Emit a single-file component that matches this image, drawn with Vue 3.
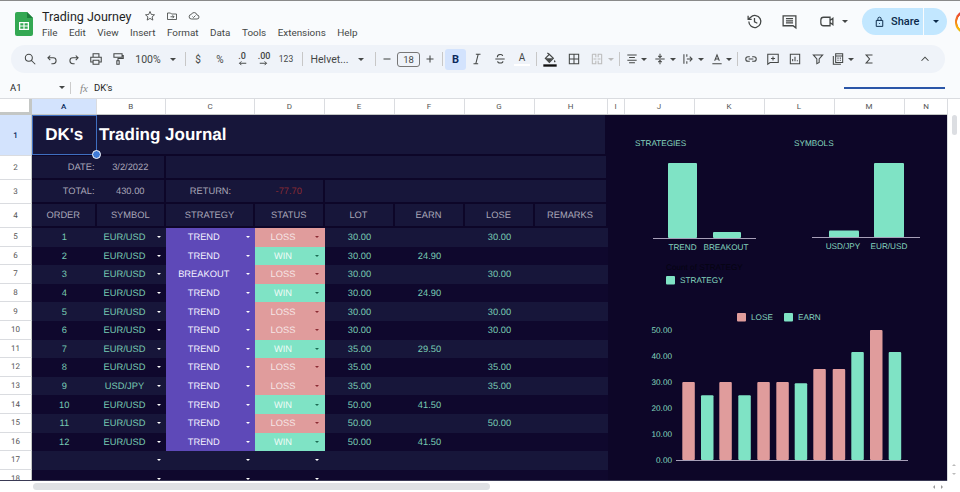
<template>
  <div class="app">
    <header class="titlebar">
      <svg class="logo" viewBox="0 0 18 24">
        <path d="M2 0h10l6 6v16a2 2 0 0 1-2 2H2a2 2 0 0 1-2-2V2a2 2 0 0 1 2-2z" fill="#34a853" />
        <path d="M12 0l6 6h-6z" fill="#1e7e3c" />
        <path d="M4 10h10v8H4zM5.300 11.300v2.100h3.100v-2.100zM9.600 11.300v2.100h3.100v-2.100zM5.300 14.600v2.100h3.100v-2.100zM9.600 14.600v2.100h3.100v-2.100z" fill="#fff" fill-rule="evenodd" />
      </svg>
      <div class="docinfo">
        <div class="docline">
          <span class="docname">Trading Journey</span>
          <svg class="ico doc-ico" viewBox="0 0 24 24"><path d="M12 3l2.700 6 6.300.6-4.800 4.200 1.500 6.400-5.700-3.400-5.700 3.400 1.500-6.400L3 9.600 9.300 9z" /></svg>
          <svg class="ico doc-ico" viewBox="0 0 24 24"><path d="M3 6h6l2 2h10v11H3zM9 13.500h7M13 10.500l3 3-3 3" /></svg>
          <svg class="ico doc-ico" viewBox="0 0 24 24"><path d="M7 18a4.500 4.500 0 0 1-.5-9A6 6 0 0 1 18 10a4 4 0 0 1 0 8zM9 13l2 2 4-4" /></svg>
        </div>
        <nav class="menu">
          <span v-for="m in menus" :key="m">{{ m }}</span>
        </nav>
      </div>
      <div class="actions">
        <svg class="ico act-ico" viewBox="0 0 24 24"><path d="M4 12a8.500 8.500 0 1 0 2.600-6.100L3 9M3 4v5h5M12 7v5.500l4 2" /></svg>
        <svg class="ico act-ico act-comment" viewBox="0 0 24 24"><path d="M3 4h18v17l-4-3H3zM7 8h10M7 11h10M7 14h10" /></svg>
        <svg class="ico act-ico act-cam" viewBox="0 0 24 24"><path d="M8 6h9v12H8a4 4 0 0 1-4-4v-4a4 4 0 0 1 4-4zM17 10.500l4-3v9l-4-3" /></svg>
        <i class="tcaret act-caret"></i>
        <div class="share">
          <svg class="ico lock" viewBox="0 0 24 24"><path d="M6 10h12v11H6zM9 10V7a3 3 0 0 1 6 0v3M12 15v1.500" /></svg>
          <span class="share-label">Share</span>
          <span class="share-more"><i class="tcaret dark"></i></span>
        </div>
        <div class="avatar"></div>
      </div>
    </header>

    <div class="toolbar">
      <template v-for="(t, i) in tools" :key="i">
        <i v-if="t.k === 'sep'" class="sep" :style="{ marginLeft: t.l + 'px', marginRight: t.r + 'px' }"></i>
        <span v-else-if="t.k === 'caret'" class="tb" :style="boxStyle(t, 6)"><i class="tcaret" :class="{ off: t.off }"></i></span>
        <span v-else-if="t.k === 'text'" class="tb label" :class="t.c" :style="boxStyle(t, 22)">{{ t.s }}</span>
        <span v-else-if="t.k === 'dec'" class="tb" :style="boxStyle(t, 22)">
          <span class="dec">
            <span>{{ t.s }}</span>
            <svg class="ico dec-arrow" viewBox="0 0 12 6"><path :d="t.d" /></svg>
          </span>
        </span>
        <span v-else-if="t.k === 'under'" class="tb" :style="boxStyle(t, 22)">
          <span class="under">
            <span>A</span>
            <i class="bar"></i>
          </span>
        </span>
        <span v-else-if="t.k === 'fill'" class="tb" :style="boxStyle(t, 22)">
          <svg class="ico fill" viewBox="0 0 24 24">
            <path d="M5 11l6-6 6 6-6 6zM8 3l3 2" />
            <path d="M5.500 11h11L11 16.500zM19 13c1.200 2 1.800 3 .8 3.800-1 .5-2.200-.2-1.800-1.300z" fill="#444746" stroke="none" />
            <rect x="2" y="20" width="20" height="3.500" fill="#111" stroke="none" />
          </svg>
        </span>
        <span v-else class="tb" :style="boxStyle(t, 22)">
          <svg class="ico" :class="t.c" viewBox="0 0 24 24"><path :d="t.d" /></svg>
        </span>
      </template>
    </div>

    <div class="formula">
      <span class="cellref">A1</span>
      <i class="tcaret"></i>
      <i class="fsep"></i>
      <span class="fx">fx</span>
      <span class="fval">DK's</span>
      <i class="progress"></i>
    </div>

    <div class="sheetarea">
      <div class="sheet">
        <div class="grid colhead">
          <div class="corner"></div>
          <div v-for="c in columns" :key="c" class="colname" :class="{ on: c === 'A' }">{{ c }}</div>
        </div>

        <div class="grid row r1">
          <div class="rownum on">1</div>
          <div class="cell sel">DK's<i class="handle"></i></div>
          <div class="cell title">Trading Journal</div>
        </div>

        <div class="grid row r24">
          <div class="rownum">2</div>
          <div class="cell right muted nob">DATE:</div>
          <div class="cell muted">3/2/2022</div>
          <div class="cell span6"></div>
        </div>

        <div class="grid row r24">
          <div class="rownum">3</div>
          <div class="cell right muted nob">TOTAL:</div>
          <div class="cell muted">430.00</div>
          <div class="cell muted nob">RETURN:</div>
          <div class="cell neg">-77.70</div>
          <div class="cell span4"></div>
        </div>

        <div class="grid row r24">
          <div class="rownum">4</div>
          <div v-for="h in headers" :key="h" class="cell muted">{{ h }}</div>
        </div>

        <div v-for="(r, i) in rows" :key="i" class="grid row data" :class="{ alt: i % 2 === 1 }">
          <div class="rownum">{{ i + 5 }}</div>
          <div class="dcell">{{ r.order }}</div>
          <div class="dcell drop"><span class="txt">{{ r.symbol }}</span><i class="dcaret"></i></div>
          <div class="dcell drop" :class="{ purple: r.strategy }"><span class="txt">{{ r.strategy }}</span><i class="dcaret"></i></div>
          <div class="dcell drop" :class="statusClass(r.status)"><span class="txt">{{ r.status }}</span><i class="dcaret"></i></div>
          <div class="dcell">{{ r.lot }}</div>
          <div class="dcell">{{ r.earn }}</div>
          <div class="dcell">{{ r.lose }}</div>
          <div class="dcell"></div>
        </div>

        <svg class="chart chart-a" viewBox="630 130 135 160">
          <text x="635" y="146" class="ct">STRATEGIES</text>
          <rect x="668" y="163" width="29" height="75" rx="1" class="earn" />
          <rect x="713" y="232" width="28" height="6" rx="1" class="earn" />
          <path d="M653 238.500H756" class="axis" />
          <text x="682.500" y="249.500" class="ct" text-anchor="middle">TREND</text>
          <text x="726" y="249.500" class="ct" text-anchor="middle">BREAKOUT</text>
          <text x="666" y="270" class="ct hidden-label">Count of STRATEGY</text>
          <rect x="666" y="276" width="9" height="8.500" rx="1" class="earn" />
          <text x="680" y="283" class="ct">STRATEGY</text>
        </svg>

        <svg class="chart chart-b" viewBox="790 130 135 125">
          <text x="794" y="146" class="ct">SYMBOLS</text>
          <rect x="829" y="230.500" width="30" height="7" rx="1" class="earn" />
          <rect x="874" y="163" width="30" height="74.500" rx="1" class="earn" />
          <path d="M812 237.500H920" class="axis" />
          <text x="843" y="248.500" class="ct" text-anchor="middle">USD/JPY</text>
          <text x="889" y="248.500" class="ct" text-anchor="middle">EUR/USD</text>
        </svg>

        <svg class="chart chart-c" viewBox="640 305 280 165">
          <rect x="737" y="313" width="9" height="8.500" rx="1" class="lose" />
          <text x="751" y="320" class="ct">LOSE</text>
          <rect x="784" y="313" width="9" height="8.500" rx="1" class="earn" />
          <text x="798" y="320" class="ct">EARN</text>
          <text v-for="(l, i) in yLabels" :key="l" x="672" :y="333 + i * 26" class="ct" text-anchor="end">{{ l }}</text>
          <rect
            v-for="b in bars"
            :key="b.x"
            :x="b.x"
            :y="460 - b.v * 2.6"
            width="12.500"
            :height="b.v * 2.6"
            rx="1"
            :class="b.type"
          />
          <path d="M676 460.500H908" class="axis" />
        </svg>
      </div>

      <div class="vscroll">
        <div class="vthumb"></div>
        <div class="vbtns">
          <i class="arr up"></i>
          <i class="arr down"></i>
        </div>
      </div>
    </div>

    <div class="hscroll">
      <div class="hthumb"></div>
      <div class="hbtns">
        <i class="arr left"></i>
        <i class="arr rightward"></i>
      </div>
    </div>
  </div>
</template>

<script setup>
const menus = ['File', 'Edit', 'View', 'Insert', 'Format', 'Data', 'Tools', 'Extensions', 'Help']
const columns = ['A', 'B', 'C', 'D', 'E', 'F', 'G', 'H', 'I', 'J', 'K', 'L', 'M', 'N']
const headers = ['ORDER', 'SYMBOL', 'STRATEGY', 'STATUS', 'LOT', 'EARN', 'LOSE', 'REMARKS']
const yLabels = ['50.00', '40.00', '30.00', '20.00', '10.00', '0.00']

const tools = [
  { d: 'M10 4a6 6 0 1 0 0 12a6 6 0 0 0 0-12zM15 15l6 6' },
  { d: 'M9 6l-4 4 4 4M5 10h9a5 5 0 0 1 0 10h-3' },
  { d: 'M15 6l4 4-4 4M19 10h-9a5 5 0 0 0 0 10h3' },
  { d: 'M7 8V3h10v5M7 17H3V9h18v8h-4M7 14h10v7H7z' },
  { d: 'M5 3h14v6H5zM19 6h2v5h-9v4M10 15h4v6h-4z' },
  { k: 'text', s: '100%', w: 38 },
  { k: 'caret', w: 12 },
  { k: 'sep', l: 6, r: 1 },
  { k: 'text', s: '$', c: 'small' },
  { k: 'text', s: '%', c: 'small' },
  { k: 'dec', s: '.0', d: 'M11 3H2M4.500 .5L2 3l2.500 2.500' },
  { k: 'dec', s: '.00', d: 'M1 3h9M7.500 .5L10 3 7.500 5.500' },
  { k: 'text', s: '123', c: 'tiny' },
  { k: 'sep', l: 5, r: 1 },
  { k: 'text', s: 'Helvet...', w: 51 },
  { k: 'caret', w: 12 },
  { k: 'sep', l: 8, r: 0 },
  { d: 'M6 12h12', w: 21 },
  { k: 'text', s: '18', c: 'sizebox', w: 23 },
  { d: 'M6 12h12M12 6v12', w: 20 },
  { k: 'sep', l: 2, r: 2 },
  { k: 'text', s: 'B', c: 'bold', w: 21 },
  { d: 'M10 4h8M6 20h8M14 4l-4 16' },
  { d: 'M4 12h16M7.500 9c-.5-6 9-6 9-2M8 16c0 4 9 4 9 0', w: 23 },
  { k: 'under' },
  { k: 'sep', l: 3, r: 1 },
  { k: 'fill', w: 24 },
  { d: 'M4 4h16v16H4zM4 12h16M12 4v16', w: 24 },
  { d: 'M4 4h6v5M4 4v16h6v-5M20 4h-6v5M20 4v16h-6v-5M6 12h5M18 12h-5', c: 'off' },
  { k: 'caret', w: 6, off: true },
  { k: 'sep', l: 5, r: 1 },
  { d: 'M4 5h16M7 9.500h10M4 14h16M7 18.500h10', w: 19, l: 1 },
  { k: 'caret' },
  { d: 'M4 12h16M12 3v6M9 6.500l3 3 3-3M12 21v-6M9 17.500l3-3 3 3', w: 16, l: 5 },
  { k: 'caret', l: 2 },
  { d: 'M5 4v16M10 12h9M15 8l4 4-4 4M10 4v4M10 16v4', w: 16, l: 4 },
  { k: 'caret', l: 2 },
  { d: 'M8 15l4-10 4 10M9.500 12h5M4 20h16', w: 16, l: 5 },
  { k: 'caret', l: 1 },
  { k: 'sep', l: 5, r: 1 },
  { d: 'M10 8H7a4 4 0 0 0 0 8h3M14 8h3a4 4 0 0 1 0 8h-3M8 12h8', w: 24 },
  { d: 'M3 4h18v14H7l-4 3zM12 7.500v7M8.500 11h7', w: 20 },
  { d: 'M4 4h16v16H4zM8 16v-4M12 16V8M16 16v-2', w: 24 },
  { d: 'M4 5h16l-6 7v6l-4 2v-8z' },
  { d: 'M4 7v14h13M8 3h12v15H8zM8 7h12M11 10.500h2M15 10.500h2M11 14h2M15 14h2', w: 18 },
  { k: 'caret', l: 1 },
  { d: 'M18 5H7l6 7-6 7h11', w: 24, l: 3 },
  { d: 'M6 15l6-6 6 6', l: 33 },
]

function boxStyle(t, w) {
  return { width: (t.w || w) + 'px', marginLeft: (t.l || 0) + 'px' }
}

const raw = [
  ['EUR/USD', 'TREND', 'LOSS', '30.00', '', '30.00'],
  ['EUR/USD', 'TREND', 'WIN', '30.00', '24.90', ''],
  ['EUR/USD', 'BREAKOUT', 'LOSS', '30.00', '', '30.00'],
  ['EUR/USD', 'TREND', 'WIN', '30.00', '24.90', ''],
  ['EUR/USD', 'TREND', 'LOSS', '30.00', '', '30.00'],
  ['EUR/USD', 'TREND', 'LOSS', '30.00', '', '30.00'],
  ['EUR/USD', 'TREND', 'WIN', '35.00', '29.50', ''],
  ['EUR/USD', 'TREND', 'LOSS', '35.00', '', '35.00'],
  ['USD/JPY', 'TREND', 'LOSS', '35.00', '', '35.00'],
  ['EUR/USD', 'TREND', 'WIN', '50.00', '41.50', ''],
  ['EUR/USD', 'TREND', 'LOSS', '50.00', '', '50.00'],
  ['EUR/USD', 'TREND', 'WIN', '50.00', '41.50', ''],
]

const rows = raw.map((r, i) => ({
  order: i + 1,
  symbol: r[0],
  strategy: r[1],
  status: r[2],
  lot: r[3],
  earn: r[4],
  lose: r[5],
}))
rows.push({}, {})

const barX = [682.3, 701, 719.3, 738.3, 757.3, 776.3, 794.7, 813.3, 832.7, 851.3, 870, 888.7]
const bars = raw.map((r, i) => ({
  x: barX[i],
  v: Number(r[4] || r[5]),
  type: r[4] ? 'earn' : 'lose',
}))

function statusClass(s) {
  if (s === 'LOSS') return 'loss'
  if (s === 'WIN') return 'win'
  return ''
}
</script>

<style scoped>
.app {
  width: 960px;
  height: 492px;
  overflow: hidden;
  background: #f9fbfd;
  border-top: 1px solid #8a8a8a;
  box-sizing: border-box;
  font-family: Roboto, "Liberation Sans", sans-serif;
  color: #444746;
  display: flex;
  flex-direction: column;
}

.ico {
  width: 14px;
  height: 14px;
  fill: none;
  stroke: #444746;
  stroke-width: 1.8;
  display: block;
}

.titlebar {
  height: 43px;
  flex: none;
  display: flex;
  align-items: flex-start;
  padding-left: 15px;
  box-sizing: border-box;
}

.logo {
  width: 18px;
  height: 24px;
  margin-top: 11px;
}

.docinfo {
  margin-left: 9px;
  padding-top: 6px;
}

.docline {
  display: flex;
  align-items: center;
  height: 18px;
}

.docname {
  font-size: 12.500px;
  color: #1f1f1f;
  width: 102px;
  white-space: nowrap;
}

.doc-ico {
  width: 12px;
  height: 12px;
  margin-right: 10px;
  stroke-width: 1.7;
}

.menu {
  display: flex;
  gap: 11.500px;
  font-size: 9.900px;
  margin-top: 2px;
  color: #444746;
}

.actions {
  margin-left: auto;
  display: flex;
  align-items: center;
  height: 27px;
  margin-top: 7px;
}

.act-ico {
  width: 17px;
  height: 17px;
}

.act-comment {
  margin-left: 18px;
}

.act-cam {
  margin-left: 20px;
}

.act-caret {
  margin-left: 7px;
}

.tcaret {
  display: block;
  width: 0;
  height: 0;
  border-left: 3px solid transparent;
  border-right: 3px solid transparent;
  border-top: 3px solid #444746;
  flex: none;
}

.tcaret.off {
  border-top-color: #bbb;
}

.tcaret.dark {
  border-top-color: #0b2a4a;
}

.share {
  margin-left: 14px;
  width: 85px;
  height: 27px;
  border-radius: 14px;
  background: #c2e7ff;
  display: flex;
  align-items: center;
  padding-left: 11px;
  box-sizing: border-box;
  color: #0b2a4a;
}

.lock {
  width: 13px;
  height: 13px;
  stroke: #0b2a4a;
}

.share-label {
  font-size: 11px;
  font-weight: 500;
  margin-left: 5px;
}

.share-more {
  margin-left: auto;
  width: 24px;
  height: 27px;
  border-left: 1px solid #f9fbfd;
  display: flex;
  align-items: center;
  justify-content: center;
  box-sizing: border-box;
}

.avatar {
  margin-left: 8px;
  margin-right: -19px;
  width: 24px;
  height: 24px;
  flex: none;
  border-radius: 50%;
  background: radial-gradient(circle, #fff 9.500px, transparent 10px), conic-gradient(from 230deg, #fbbc05, #ea4335 90deg, #4285f4 180deg, #34a853 270deg, #fbbc05);
}

.toolbar {
  flex: none;
  margin: 1px 15px 0 11px;
  height: 28px;
  border-radius: 14px;
  background: #eff3f9;
  display: flex;
  align-items: center;
  padding-left: 8px;
}

.tb {
  flex: none;
  height: 100%;
  display: flex;
  align-items: center;
  justify-content: center;
}

.tb.label {
  font-size: 10.500px;
}

.tb.small {
  font-size: 10px;
}

.tb.tiny {
  font-size: 8.500px;
}

.tb.sizebox {
  height: 15px;
  border: 1px solid #777;
  border-radius: 3px;
  box-sizing: border-box;
  font-size: 9.500px;
}

.tb.bold {
  height: 21px;
  background: #d3e3fd;
  border-radius: 3px;
  font-weight: 700;
  font-size: 11px;
  color: #0b2a5c;
}

.sep {
  flex: none;
  width: 1px;
  height: 14px;
  background: #c7c7c7;
}

.dec {
  display: flex;
  flex-direction: column;
  align-items: center;
  font-size: 9px;
  font-weight: 500;
  line-height: 9px;
}

.dec-arrow {
  width: 9px;
  height: 4.500px;
  stroke-width: 1.3;
}

.under {
  display: flex;
  flex-direction: column;
  align-items: center;
  font-size: 10px;
  line-height: 11px;
}

.bar {
  width: 16px;
  height: 2px;
  background: #fff;
  margin-top: 1px;
}

.ico.fill {
  width: 16px;
  height: 16px;
}

.ico.off {
  stroke: #bbb;
}

.formula {
  flex: none;
  height: 25px;
  display: flex;
  align-items: center;
  padding: 4px 0 0 10px;
  font-size: 9.500px;
  color: #1f1f1f;
  box-sizing: border-box;
}

.cellref {
  width: 49px;
}

.fsep {
  width: 1px;
  height: 12px;
  background: #ccc;
  margin-left: 5px;
}

.fx {
  font-family: "Liberation Serif", serif;
  font-style: italic;
  font-size: 11px;
  color: #888;
  margin-left: 9px;
}

.fval {
  margin-left: 6px;
}

.progress {
  width: 101px;
  height: 2px;
  background: #2b56a8;
  margin-left: auto;
  margin-right: 15px;
}

.sheetarea {
  flex: none;
  height: 383px;
  display: flex;
  border-top: 1px solid #dadce0;
  box-sizing: border-box;
}

.sheet {
  position: relative;
  width: 947px;
  flex: none;
  overflow: hidden;
  background: #0d0628;
  border-bottom: 1px solid #3a3a55;
  box-sizing: border-box;
}

.grid {
  display: grid;
  grid-template-columns: 32px 64.500px 69.500px 89px 69.500px 70px 70px 70px 73px;
}

.colhead {
  grid-template-columns: 32px 64.500px 69.500px 89px 69.500px 70px 70px 70px 73px 17px 70px 70px 70px 70px 44px;
  height: 16px;
  background: #fff;
  border-bottom: 1px solid #c4c7c5;
  box-sizing: border-box;
}

.corner {
  background: #fff;
  border-right: 3px solid #c4c7c5;
  border-bottom: 2px solid #c4c7c5;
  box-sizing: border-box;
}

.colname {
  font-size: 8px;
  color: #555;
  display: flex;
  align-items: center;
  justify-content: center;
  border-right: 1px solid #dadce0;
  box-sizing: border-box;
}

.colname.on {
  background: #d3e3fd;
  color: #0b2a5c;
  font-weight: 500;
}

.rownum {
  background: #fff;
  font-size: 8px;
  color: #555;
  font-family: Roboto, "Liberation Sans", sans-serif;
  display: flex;
  align-items: center;
  justify-content: center;
  border-bottom: 1px solid #dadce0;
  border-right: 1px solid #c4c7c5;
  box-sizing: border-box;
}

.rownum.on {
  background: #d3e3fd;
  color: #0b2a5c;
  font-weight: 500;
}

.row {
  font-family: "Liberation Sans", Arial, sans-serif;
  font-size: 9.300px;
  text-rendering: geometricPrecision;
}

.r1 {
  height: 41px;
  grid-template-columns: 32px 64.500px 510.500px;
}

.r24 {
  height: 24px;
}

.cell {
  background: #17163a;
  border-right: 2px solid #0d0628;
  border-bottom: 2px solid #0d0628;
  box-sizing: border-box;
  display: flex;
  align-items: center;
  justify-content: center;
  min-width: 0;
}

.cell.nob {
  border-right: none;
}

.cell.right {
  justify-content: flex-end;
  padding-right: 2px;
}

.cell.muted {
  color: #a9a6b8;
}

.cell.neg {
  color: #8a2a33;
}

.cell.span6 {
  grid-column: span 6;
}

.cell.span4 {
  grid-column: span 4;
}

.sel {
  position: relative;
  font-size: 17px;
  font-weight: 700;
  color: #fff;
  border: 1.500px solid #3f6fc0;
  margin-bottom: 1px;
}

.handle {
  position: absolute;
  right: -5px;
  bottom: -5px;
  width: 7px;
  height: 7px;
  border-radius: 50%;
  background: #3f7ad6;
  border: 1px solid #fff;
  z-index: 2;
}

.cell.title {
  justify-content: flex-start;
  padding-left: 2.500px;
  font-size: 17px;
  font-weight: 700;
  color: #fff;
}

.data {
  height: 18.600px;
}

.dcell {
  display: flex;
  align-items: center;
  justify-content: center;
  background: #17163a;
  color: #78cbb3;
  min-width: 0;
}

.alt .dcell {
  background: #0f082d;
}

.data .dcell.purple {
  background: #5e49b8;
  color: #f4f2ff;
}

.data .dcell.loss {
  background: #e09c9c;
  color: #f6e6e6;
}

.data .dcell.win {
  background: #7fe3c5;
  color: #f0fbf7;
}

.txt {
  flex: 1;
  text-align: center;
  min-width: 0;
}

.dcaret {
  flex: none;
  width: 0;
  height: 0;
  margin: 0 5.500px 0 4px;
  border-left: 2.500px solid transparent;
  border-right: 2.500px solid transparent;
  border-top: 2.500px solid #fff;
}

.loss .dcaret {
  border-top-color: #8a2b33;
}

.win .dcaret {
  border-top-color: #1d6b52;
}

.chart {
  position: absolute;
  font-family: "Liberation Sans", Arial, sans-serif;
  text-rendering: geometricPrecision;
}

.chart-a {
  left: 630px;
  top: 31px;
  width: 135px;
  height: 160px;
}

.chart-b {
  left: 790px;
  top: 31px;
  width: 135px;
  height: 125px;
}

.chart-c {
  left: 640px;
  top: 206px;
  width: 280px;
  height: 165px;
}

.ct {
  font-size: 8.200px;
  fill: #85d6bf;
}

.ct.hidden-label {
  fill: #050410;
}

.earn {
  fill: #7fe3c5;
}

.lose {
  fill: #e09c9c;
}

.axis {
  stroke: #a79fb8;
  stroke-width: 1;
  fill: none;
}

.vscroll {
  flex: 1;
  display: flex;
  flex-direction: column;
  align-items: center;
  background: #fff;
  border-left: 1px solid #dadce0;
  padding-top: 16px;
  box-sizing: border-box;
}

.vthumb {
  width: 5px;
  height: 20px;
  border-radius: 3px;
  background: #dcdee2;
}

.vbtns {
  margin-top: auto;
  margin-bottom: 4px;
  display: flex;
  flex-direction: column;
  gap: 7px;
}

.arr {
  display: block;
  width: 0;
  height: 0;
  border: 2.500px solid transparent;
}

.arr.up {
  border-bottom-color: #bbb;
}

.arr.down {
  border-top-color: #bbb;
}

.arr.left {
  border-right-color: #999;
}

.arr.rightward {
  border-left-color: #999;
}

.hscroll {
  flex: 1;
  display: flex;
  align-items: center;
  padding-left: 33px;
  background: #fff;
  min-height: 0;
}

.hthumb {
  width: 457px;
  height: 7px;
  border-radius: 4px;
  background: #dfe1e4;
}

.hbtns {
  margin-left: auto;
  margin-right: 15px;
  display: flex;
  gap: 6px;
}
</style>
